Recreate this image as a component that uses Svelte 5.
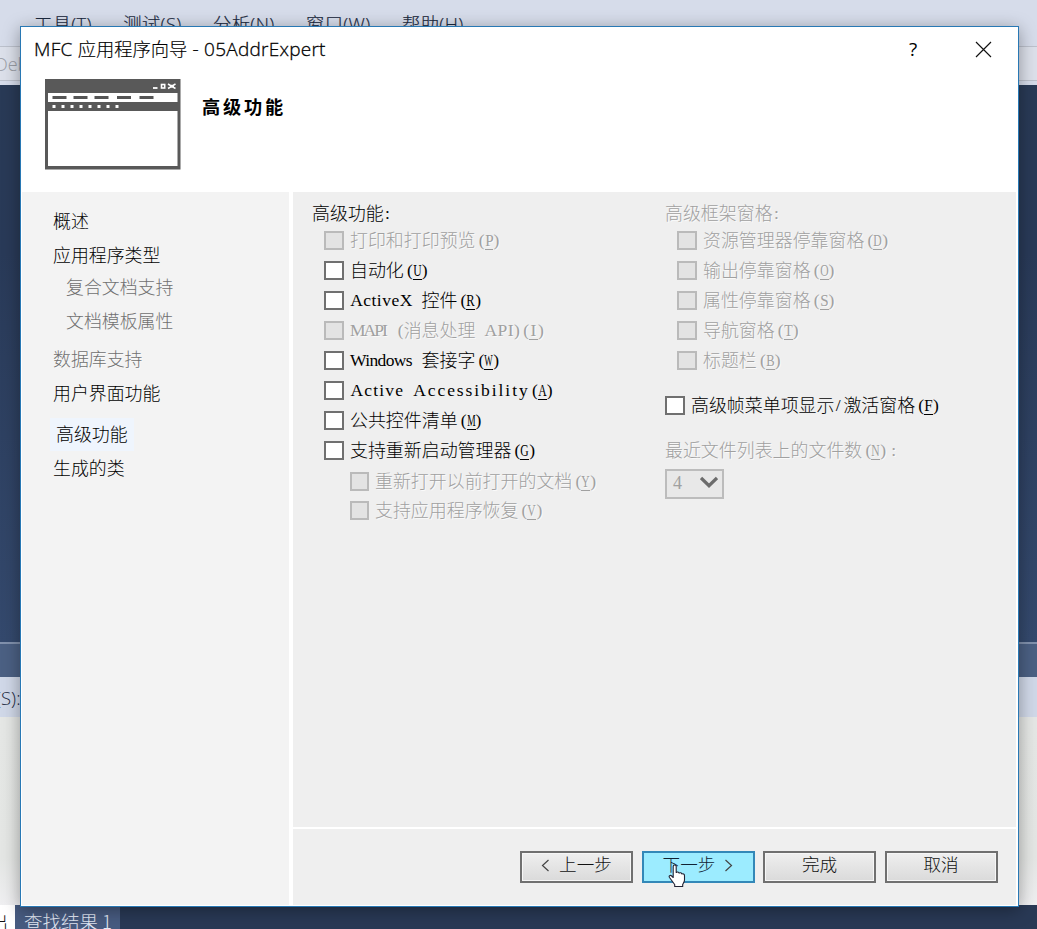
<script>
  const CELL = 8.95;
  const SIZE = 17.5;
  const widths = {
    A: 0.722, P: 0.556, I: 0.333, X: 0.722, W: 0.944, M: 0.889, U: 0.722, R: 0.667, G: 0.722, Y: 0.722,
    V: 0.722, D: 0.722, O: 0.722, S: 0.556, T: 0.611, B: 0.667, F: 0.556, N: 0.722, '4': 0.5,
    c: 0.444, t: 0.278, i: 0.278, v: 0.5, e: 0.444, n: 0.5, d: 0.5, o: 0.5, w: 0.722, s: 0.389,
    b: 0.5, l: 0.278, y: 0.5, '(': 0.333, ')': 0.333, ':': 0.278, '/': 0.278, ' ': 0.25
  };

  // Splits a label into ideograph runs and half-width runs.
  // Spaces in a half-width run take a full cell, so words keep the grid.
  function runs(text) {
    return (text.match(/ |[\x21-\x7e]+|[^\x20-\x7e]+/g) ?? []).map((t) => {
      if (t.charCodeAt(0) > 126) return { t, latin: false };
      const sum = [...t].reduce((a, c) => a + (widths[c] ?? 0.5) * SIZE, 0);
      const ls = (t.length * CELL - sum) / t.length;
      return { t, latin: true, w: t.length * CELL, ls, pad: t === '(' ? ls : Math.max(0, ls / 3) };
    });
  }
  const keyScale = (k) => Math.min(1, 8.4 / (widths[k] * SIZE));

  const steps = [
    { text: '概述', gap: 0 },
    { text: '应用程序类型', gap: 1 },
    { text: '复合文档支持', gap: -1, sub: true },
    { text: '文档模板属性', gap: 1, sub: true },
    { text: '数据库支持', gap: 5, off: true },
    { text: '用户界面功能', gap: 1 },
    { text: '高级功能', gap: 8, current: true },
    { text: '生成的类', gap: 1 }
  ];
  const features = [
    { text: '打印和打印预览', key: 'P', off: true },
    { text: '自动化', key: 'U' },
    { text: 'ActiveX 控件', key: 'R' },
    { text: 'MAPI (消息处理 API)', key: 'I', off: true },
    { text: 'Windows 套接字', key: 'W' },
    { text: 'Active Accessibility', key: 'A' },
    { text: '公共控件清单', key: 'M' },
    { text: '支持重新启动管理器', key: 'G' }
  ];
  const restart = [
    { text: '重新打开以前打开的文档', key: 'Y', off: true },
    { text: '支持应用程序恢复', key: 'V', off: true }
  ];
  const panes = [
    { text: '资源管理器停靠窗格', key: 'D', off: true },
    { text: '输出停靠窗格', key: 'O', off: true },
    { text: '属性停靠窗格', key: 'S', off: true },
    { text: '导航窗格', key: 'T', off: true },
    { text: '标题栏', key: 'B', off: true }
  ];
</script>

{#snippet half(r)}<span class="lat" style="width:{r.w - r.pad}px;padding-left:{r.pad}px;letter-spacing:{r.ls}px">{r.t}</span>{/snippet}

{#snippet label(text, key, tail)}
  <span class="label">{#each runs(text) as r}{#if r.latin}{@render half(r)}{:else}{r.t}{/if}{/each}{#if key}<span class="lat paren open">(</span><span class="lat key"><span class="glyph" style="transform:scaleX({keyScale(key)})">{key}</span></span><span class="lat paren">)</span>{/if}{#if tail}<span class="lat paren tail">{tail}</span>{/if}</span>
{/snippet}

{#snippet check(item)}
  <div class="check" class:off={item.off}>
    <span class="box"></span>
    {@render label(item.text, item.key)}
  </div>
{/snippet}

<div class="screen">
  <div class="ide">
    <div class="menubar">
      <span>工具(T)</span><span>测试(S)</span><span>分析(N)</span><span>窗口(W)</span><span>帮助(H)</span>
    </div>
    <div class="toolbar"><span>Deb</span></div>
    <div class="editor"></div>
    <div class="panehead"></div>
    <div class="source"><span>(S):</span></div>
    <div class="output"></div>
    <div class="tabs"><span class="tab active">出</span><span class="tab">查找结果 1</span></div>
  </div>

  <div class="dialog">
    <div class="titlebar">
      <div class="title">MFC <span class="han">应用程序向导</span> - 05AddrExpert</div>
      <span class="help">?</span>
      <svg class="close" width="17" height="17" viewBox="0 0 17 17"><path d="M1 1 16 16M16 1 1 16" stroke="#111" stroke-width="1.150" fill="none" /></svg>
    </div>
    <div class="banner">
      <svg width="136" height="91" viewBox="0 0 136 91">
        <rect width="135.500" height="90.500" fill="#595959" />
        <rect x="3" y="14" width="129.500" height="9" fill="#fff" />
        <rect x="3" y="32" width="129.500" height="55" fill="#fff" />
        <path d="M7.500 18.500h14M28.500 18.500h14M49.500 18.500h14M72 18.500h14M94.500 18.500h14" stroke="#555" stroke-width="3" />
        <path d="M7.500 27.500h67" stroke="#fff" stroke-width="3" stroke-dasharray="3 6" />
        <path d="M108 9h4.500" stroke="#fff" stroke-width="1.800" />
        <rect x="116.500" y="5.500" width="3.200" height="3.500" fill="none" stroke="#fff" stroke-width="1.600" />
        <path d="M123 5l2.500 1.500h2.500l2.500-1.500M123 9.500l2.500-1.500h2.500l2.500 1.500M125 7h4" stroke="#fff" stroke-width="1.500" fill="none" />
      </svg>
      <h1>高级功能</h1>
    </div>

    <div class="body">
      <nav>
        {#each steps as s}
          <div class="step" class:sub={s.sub} class:off={s.off} class:current={s.current} style="margin-top:{s.gap}px"><span>{s.text}</span></div>
        {/each}
      </nav>
      <main>
        <div class="options">
          <section class="left">
            <div class="caption">{@render label('高级功能:')}</div>
            <div class="group">
              {#each features as f}{@render check(f)}{/each}
              <div class="nested">
                {#each restart as f}{@render check(f)}{/each}
              </div>
            </div>
          </section>
          <section class="right">
            <div class="caption off">{@render label('高级框架窗格:')}</div>
            <div class="group">
              {#each panes as f}{@render check(f)}{/each}
            </div>
            <div class="frame">{@render check({ text: '高级帧菜单项显示/激活窗格', key: 'F' })}</div>
            <div class="caption off recent">{@render label('最近文件列表上的文件数', 'N', ':')}</div>
            <div class="select">
              <span>4</span>
              <svg width="18" height="14" viewBox="0 0 18 14"><path d="M1 2 9 9.800 17 2" fill="none" stroke="#6c6c6c" stroke-width="3.300" /></svg>
            </div>
          </section>
        </div>
        <footer>
          <button><svg width="9" height="13" viewBox="0 0 9 13"><path d="M7.500 1 1.500 6.500 7.500 12" /></svg>上一步</button>
          <button class="next">下一步<svg width="9" height="13" viewBox="0 0 9 13"><path d="M1.500 1 7.500 6.500 1.500 12" /></svg></button>
          <button>完成</button>
          <button>取消</button>
        </footer>
      </main>
    </div>
  </div>

  <svg class="cursor" width="18" height="24" viewBox="0 0 18 24">
    <path d="M5.200 2.500c0-2 3-2 3 0v6c1-.9 2.500-.6 2.900.6 1-.7 2.400-.4 2.700.9 1.300-.6 2.700.2 2.700 1.700v4.300c0 2-1.300 3.200-1.800 4.500v2H6.700v-2C5 18.500 3.500 16 1.500 13.500c-1-1.500.7-2.900 2.200-1.500l1.500 1.500z" fill="#fff" stroke="#223" stroke-width="1.100" stroke-linejoin="round" />
  </svg>
</div>

<style>
  :global(body) { margin: 0; overflow: hidden; }
  .screen {
    position: relative;
    width: 1037px;
    height: 929px;
    overflow: hidden;
    font-family: 'Noto Sans CJK SC', sans-serif;
    font-weight: 300;
  }
  .ide { display: flex; flex-direction: column; height: 100%; color: #1b293e; font-size: 18px; }
  .menubar {
    display: flex;
    box-sizing: border-box;
    height: 46px;
    padding: 11px 0 0 34px;
    gap: 31.500px;
    background: #d6dcea;
    line-height: 26px;
    font-family: 'Open Sans', 'Noto Sans CJK SC', sans-serif;
    font-size: 18.300px;
    letter-spacing: 0.350px;
    white-space: nowrap;
    -webkit-text-stroke: 0.200px #1b293e;
  }
  .toolbar {
    box-sizing: border-box;
    height: 39px;
    border-top: 1px solid #bcc1cc;
    background: linear-gradient(#dce0ea 0 33px, #bcc1cc 33px 34px, #d6dcea 34px);
    color: #9a9da5;
    line-height: 35px;
    font-family: 'Open Sans', sans-serif;
  }
  .toolbar span { margin-left: -5px; }
  .editor { height: 557px; background: linear-gradient(#293a56, #293a58 30%, #34496d); }
  .panehead { box-sizing: border-box; height: 35px; border-top: 2px solid #8191ad; background: #4b6083; }
  .source { height: 40px; background: #d0d8e8; line-height: 41px; font-family: 'Open Sans', sans-serif; font-size: 18.500px; }
  .source span { margin-left: -4px; }
  .output { height: 188px; background: linear-gradient(#e5e7e5, #e4e6e4 75%, #efeff1); }
  .tabs { display: flex; height: 24px; background: #293955; overflow: hidden; }
  .tab { width: 105px; box-sizing: border-box; padding-left: 9px; background: #475b80; color: #e2e8f4; line-height: 32px; font-size: 18.500px; white-space: nowrap; }
  .tab.active { width: 15px; padding: 0 7px 0 0; direction: rtl; background: #fff; color: #111; overflow: hidden; }

  .dialog {
    position: absolute;
    left: 20px;
    top: 26px;
    display: flex;
    flex-direction: column;
    box-sizing: border-box;
    width: 999px;
    height: 881px;
    border: 1px solid #2878b4;
    background: #fff;
    box-shadow: 0 3px 16px rgba(0, 0, 0, 0.360);
    color: #000;
  }
  .titlebar { display: flex; align-items: center; box-sizing: border-box; height: 46px; padding: 0 26px 2px 13px; }
  .title { flex: 1; margin-top: -1px; font-family: 'Open Sans', sans-serif; font-size: 19px; font-weight: 300; letter-spacing: 0.250px; white-space: nowrap; -webkit-text-stroke: 0.300px #000; }
  .han { font-family: 'Noto Sans CJK SC', sans-serif; font-size: 18.300px; font-weight: 300; letter-spacing: 0; -webkit-text-stroke: 0.150px #000; }
  .help { width: 11px; margin-right: 55px; font-family: 'Open Sans', sans-serif; font-size: 19px; font-weight: 400; }
  .close { flex: none; }
  .banner { display: flex; align-items: flex-start; height: 113px; padding: 6px 0 0 24px; gap: 21px; }
  h1 { margin: 12px 0 0; font-size: 18.200px; line-height: 30px; font-weight: 700; letter-spacing: 2.800px; }
  .body { display: flex; gap: 4px; flex: 1; padding: 0 2px 1px 1px; }
  nav { box-sizing: border-box; width: 267px; padding-top: 13px; background: #f3f3f3; font-size: 17.900px; }
  .step { display: flex; align-items: center; box-sizing: border-box; height: 33px; padding-left: 31px; white-space: nowrap; line-height: 31px; }
  .step span { padding-bottom: 2px; }
  .sub { padding-left: 44px; }
  .sub, .step.off { color: #707070; }
  .current { padding-left: 28px; }
  .current span { padding: 0 6px 2px; background: #eff5fd; }
  main { display: flex; flex: 1; flex-direction: column; background: #efefef; }
  .options { display: flex; height: 635px; }
  section { display: flex; flex-direction: column; padding-top: 9px; }
  .left { width: 353px; box-sizing: border-box; padding-left: 19px; }
  .right { padding-left: 19px; }
  .caption { height: 24px; }
  .label { display: block; height: 24px; margin-top: -3px; line-height: 24px; font-size: 17.950px; white-space: pre; }
  .caption .label { margin-top: -1px; }
  .lat { display: inline-block; box-sizing: content-box; position: relative; top: -1px; font-family: 'Liberation Serif', serif; font-size: 17.500px; line-height: 20px; white-space: pre; }
  .paren { width: 8.950px; text-align: left; }
  .open { text-align: right; }
  .tail { text-align: center; }
  .key { width: 8.950px; border-bottom: 1px solid currentColor; line-height: 18px; }
  .glyph { display: flex; justify-content: center; width: 8.950px; }
  .group { display: flex; flex-direction: column; padding: 0 0 0 12px; }
  .check { display: flex; align-items: center; gap: 6px; height: 30px; }
  .box { box-sizing: border-box; width: 20px; height: 19px; border: 2px solid #707070; background: #fff; }
  .off { color: #a0a0a0; text-shadow: 1px 1px 0 #fafafa; }
  .off .box { border-color: #bababa; background: #e3e3e3; }
  .nested { padding: 2px 0 0 26px; }
  .nested .check { height: 29px; }
  .nested .box { width: 19px; }
  .frame { padding-top: 15px; }
  .recent { padding-top: 18px; height: 43px; box-sizing: border-box; }
  .select {
    display: flex;
    align-items: center;
    justify-content: space-between;
    box-sizing: border-box;
    width: 59px;
    height: 30px;
    margin-top: 6px;
    padding: 0 4px 2px 6px;
    border: 2px solid #bcbcbc;
    background: #e8e8e8;
    color: #a0a0a0;
    font-family: 'Liberation Serif', serif;
    font-size: 18px;
  }
  footer { display: flex; justify-content: flex-end; gap: 8.500px; flex: 1; padding: 22px 18.500px 0 0; border-top: 2px solid #fff; }
  button {
    display: flex;
    align-items: center;
    justify-content: center;
    gap: 9px;
    box-sizing: border-box;
    width: 113px;
    height: 32px;
    padding: 0 0 7px;
    border: 2px solid #707070;
    background: linear-gradient(#efefef, #dadada);
    box-shadow: inset 0 0 0 1px #f6f6f6;
    color: #111;
    font: 300 17.600px 'Noto Sans CJK SC', sans-serif;
  }
  button svg { margin-top: 4px; }
  .next { border-color: #3388b8; background: #9cecff; box-shadow: none; color: #123; }
  button path { fill: none; stroke: #444; stroke-width: 1.200; }
  .cursor { position: absolute; left: 668px; top: 864px; }
</style>
